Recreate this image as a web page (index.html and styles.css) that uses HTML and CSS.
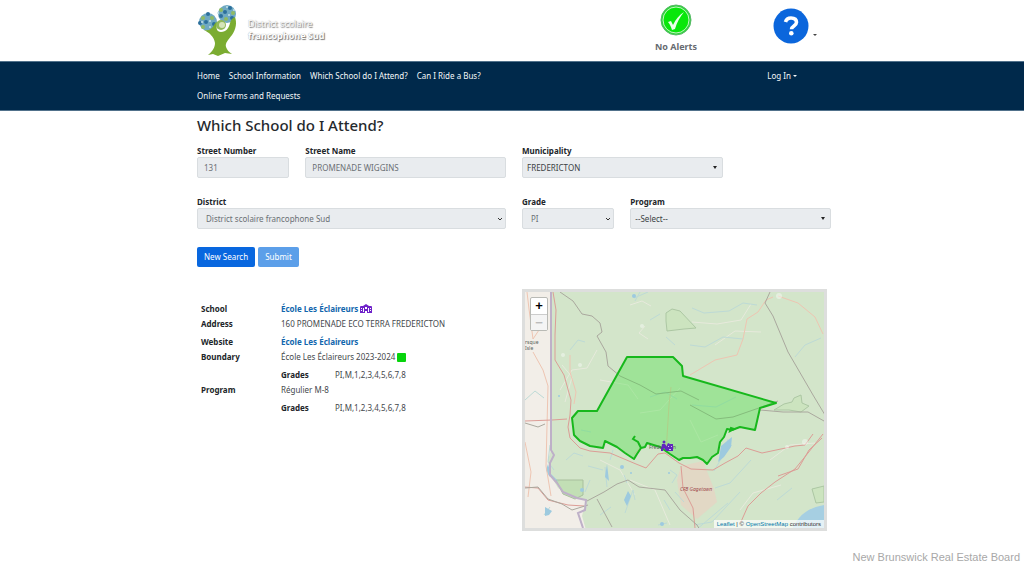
FILE: index.html
```html
<!DOCTYPE html>
<html lang="en">
<head>
<meta charset="utf-8">
<meta name="viewport" content="width=device-width, initial-scale=1">
<title>Which School do I Attend?</title>
<link rel="stylesheet" href="styles.css">
</head>
<body>
<header class="banner">
  <div class="container banner-row">
    <a class="brand" href="#">
      <svg class="brand-tree" viewBox="0 0 42 52" aria-hidden="true">
        <g fill="#6fa9c2"><circle cx="11" cy="18" r="9"/><circle cx="30" cy="10" r="9"/></g>
        <g fill="#8fba62"><circle cx="6" cy="14" r="2"/><circle cx="15" cy="14" r="2"/><circle cx="24" cy="6" r="2"/><circle cx="36" cy="9" r="2"/><circle cx="29" cy="15" r="2"/><circle cx="6" cy="23" r="2"/></g>
        <g fill="#2c6f9c"><circle cx="9" cy="18" r="2"/><circle cx="17" cy="20" r="2"/><circle cx="28" cy="8" r="2"/><circle cx="35" cy="14" r="2"/><circle cx="24" cy="12" r="2"/><circle cx="11" cy="10" r="2"/><circle cx="33" cy="4" r="2"/><circle cx="3" cy="19" r="2"/></g>
        <g fill="#c4e2ea"><circle cx="5" cy="18" r="1"/><circle cx="13" cy="23" r="1"/><circle cx="30" cy="3" r="1"/><circle cx="37" cy="6" r="1"/><circle cx="21" cy="9" r="1"/><circle cx="13" cy="17" r="1"/><circle cx="32" cy="11" r="1"/></g>
        <path fill="#7bac31" d="M7 26c5 1 8-1 10-5 1-2 2-3 4-3-3 6-1 10 3 10 5 0 8-4 9-9 1-3 2-5 5-6 2 6 1 12-3 18-4 5-7 8-6 12 1 3 3 5 6 7l-7-1-7 3-5-2-5 1c5-4 7-8 7-12-1-6-5-10-11-13z"/>
        <circle cx="24" cy="21" r="5" fill="#91b95a"/><circle cx="25" cy="21" r="3" fill="#d5e4b9"/>
      </svg>
      <span class="brand-name">District scolaire<strong>francophone Sud</strong></span>
    </a>
    <a class="alerts" href="#">
      <svg class="alerts-icon" viewBox="0 0 32 32" aria-hidden="true">
        <circle cx="16" cy="16" r="15" fill="#2fd43c" stroke="#58b967"/>
        <circle cx="16" cy="16" r="13" fill="#08e70b" stroke="#c5f5c3" stroke-width="1"/>
        <path d="M8 18l3-1 2 4c3-6 6-10 11-13-4 5-7 10-9 17l-3 1c-1-3-2-6-4-8z" fill="#eaffea"/>
      </svg>
      <span>No Alerts</span>
    </a>
    <button class="help" type="button" aria-label="Help">
      <svg class="help-icon" viewBox="0 0 36 36" aria-hidden="true">
        <circle cx="18" cy="18" r="17.500" fill="#0b66dc"/>
        <path d="M12.500 14c.8-3 3-4 5.500-4 3.500 0 5.500 1.700 5.500 4.300 0 3.700-5 3.500-5 7" fill="none" stroke="#fff" stroke-width="3.600"/>
        <circle cx="18.300" cy="25.300" r="2.300" fill="#fff"/>
      </svg>
      <span class="caret"></span>
    </button>
  </div>
</header>
<nav class="navbar">
  <div class="container nav-row">
    <div class="nav-links">
      <a href="#">Home</a><a href="#">School Information</a><a href="#">Which School do I Attend?</a><a href="#">Can I Ride a Bus?</a><a href="#">Online Forms and Requests</a>
    </div>
    <button class="login" type="button">Log In<span class="caret"></span></button>
  </div>
</nav>
<main class="container">
  <h1>Which School do I Attend?</h1>
  <form class="search">
    <div class="row">
      <div class="field span-2"><label for="number">Street Number</label><input id="number" value="131" readonly></div>
      <div class="field span-4"><label for="street">Street Name</label><input id="street" value="PROMENADE WIGGINS" readonly></div>
      <div class="field span-4"><label for="city">Municipality</label><select class="combo" id="city"><option>FREDERICTON</option></select></div>
    </div>
    <div class="row">
      <div class="field span-6"><label for="district">District</label><select class="chevron" id="district"><option>District scolaire francophone Sud</option></select></div>
      <div class="field span-2"><label for="grade">Grade</label><select class="chevron" id="grade"><option>PI</option></select></div>
      <div class="field span-4"><label for="program">Program</label><select class="combo" id="program"><option>--Select--</option></select></div>
    </div>
    <div class="actions">
      <button class="btn" type="button">New Search</button>
      <button class="btn" type="submit" disabled>Submit</button>
    </div>
  </form>
  <div class="row results">
    <dl class="details span-6">
      <dt>School</dt>
      <dd><a href="#">École Les Éclaireurs</a>
        <svg class="school-icon" viewBox="0 0 12 10" aria-hidden="true"><path d="M0 3Q0 2 1 2H3L6 0l3 2h2q1 0 1 1v6H7V7H5v2H0z" fill="#6f22c9"/><path d="M1 4h1v1H1zM1 6h1v1H1zM10 4h1v1h-1zM10 6h1v1h-1zM5 3h2v2H5zM3 4h1v4H3zM8 4h1v4H8z" fill="#fff"/></svg>
      </dd>
      <dt>Address</dt><dd>160 PROMENADE ECO TERRA FREDERICTON</dd>
      <dt class="spaced">Website</dt><dd class="spaced"><a href="#">École Les Éclaireurs</a></dd>
      <dt>Boundary</dt><dd>École Les Éclaireurs 2023-2024 <span class="swatch"></span></dd>
      <dd class="grades spaced"><b>Grades</b><span>PI,M,1,2,3,4,5,6,7,8</span></dd>
      <dt>Program</dt><dd>Régulier M-8</dd>
      <dd class="grades spaced"><b>Grades</b><span>PI,M,1,2,3,4,5,6,7,8</span></dd>
    </dl>
    <div class="map span-6">
      <svg class="map-canvas" viewBox="525 292 299 236" preserveAspectRatio="xMidYMid slice" role="img" aria-label="School boundary map">
        <rect x="520" y="285" width="310" height="250" fill="#d3e5ca"/>
        <path fill="#f2eee8" d="M520 285H551V450l-3 10 2 14 8 14 12 8 16 4-4 16 4 14H520z"/>
        <path fill="#a6cfe2" d="M824 505c-15 3-24 8-32 24h32z"/>
        <path fill="#e2d8c5" d="M681 466l22-5 11 28 3 13-20 17-16-14-4-25z"/>
        <path fill="#c2dfb5" stroke="#a8bf9d" d="M556 480h27v15l-8 4-12-5z"/>
        <path fill="#cce4bf" stroke="#acc7a3" d="M666 313l6-4 8 2 16 17-12 1-17 2-1-10zM774 410l10-6 8-2 2-4 7-3 1 8 7 3-8 6-12-2zM812 489l12-3v16l-8 1z"/>
        <g fill="none" stroke="#e7eadc">
          <path d="M560 390l12-20 15-2 10-18M562 365l10 12-7 25M692 322l25 2 24-4 10-16M630 305l12-4 9 5M645 326l-6 7 9 6M690 420l11 22 17-7M715 345l20-14 26 1M600 460l20 10 15 25M770 460l20-15 25-2M740 510l13-17 28-8M630 480l25 10 15 35M600 380l28 5 10 14M680 388l-20 22-20 3"/>
        </g>
        <g fill="none" stroke="#bddad6">
          <path d="M570 350l8-10 7 2M640 292l-5 9M634 298l14-6M650 320l10-6M692 308l12 5 25-2 14-8 14 2M690 345l15 2 18-10 20 2M795 357l10-12 16-7M732 445l-9 9 5-15M721 459l-7 12M751 460l-21 23-15 5M740 492l-28 30-18 3M728 503l-12 10-20 17M607 487l-2-20M600 515l11-8M624 475l3 8M625 513l8-23 2 10M658 525l9-2M670 470l7 5-5 8M675 492l9 10M550 445l-2 17 6 8M544 515l6-8M525 400l10-9 9 7M581 430l10 2M650 397l15-5 12 7M692 405l24 2 20-10M566 460l8-7 9 3M588 466l15 4M610 460l3-10M590 480l-5 12M670 510l-6-10M675 345l-9-8M777 500l15-12"/>
        </g>
        <g fill="#9dcadf"><path d="M545 507l7 4-3 4-4 1zM624 500l4-9 3 5-4 10zM605 477l2-13 2 17zM719 458l2-12 11-9-1 10-7 10-6 5zM548 464l3 10 8 8-10-6-3-6z"/><circle cx="622" cy="467" r="2"/><circle cx="631" cy="473" r="1"/><circle cx="662" cy="524" r="2"/><circle cx="669" cy="473" r="1"/><circle cx="634" cy="296" r="2"/><circle cx="559" cy="396" r="1"/><circle cx="582" cy="490" r="2"/></g>
        <g fill="none" stroke="#eec5b2">
          <path d="M527 292l2 17 4 30 12-18 2-22M533 352l10 18 5 16-2 80 5 30M570 355v17l6 20-2 12M666 453l3-48 2-18M690 375l25-15 22-5 6-16 4-20 11-7 8-12 7-3M778 296l20 7 17 14 8 17M640 448l-6 6M525 442l6 30-3 25"/>
        </g>
        <g fill="none" stroke="#dc9d96">
          <path d="M553 292l3 18-1 25 0 25 9 15 7 25-1 15-2 12 2 11 10 10 10 3 20 2 26 11 10 4 12-14 7-1 14 10 12 6 22 1 12-7 13-7 8-8 16 5 33-7 10-1 8-11M525 421l27-1 15-1M681 466l2 22 10 20 2 20M823 434l-15 19-13 16-20 13-14 11-13 13-8 18"/>
          <path d="M822 438l-13 12-11 19-20 7M524 487l14 1 10 12 20 5 16 1"/>
        </g>
        <g fill="none" stroke="#aaa89e">
          <path d="M560 292l13 9 9 13 10 2 8 7 2 9-5 4 9 16 2 14 12 10 20 9 16 9 25-3 18 9M770 292l-5 11 8 13 15 36 25 43 12 20M587 501l17-9 13-8 11-4 11 7 26 3 15 20 17 15 6 10M597 499l15 28M690 405l26 14 17-2 23-8 22-8M760 410l23 2 25 0 16 9M525 423l13 4 7-3M525 488l13-1 10 12 14 5 10 6 16-5"/>
        </g>
        <path fill="none" stroke="#beb0c8" stroke-width="2" d="M551 290V450l3 5-4 8 0 12 7 8 6 9 14 6 9 2-1 10-7 3 5 15"/>
        <g fill="#fff" fill-opacity=".4"><circle cx="563" cy="355" r="2"/><circle cx="642" cy="326" r="2"/><circle cx="787" cy="447" r="2"/><circle cx="580" cy="365" r="2"/><circle cx="779" cy="296" r="3"/><circle cx="805" cy="442" r="3"/></g>
        <path fill="#43e03f" fill-opacity=".36" stroke="#17b81c" stroke-width="2" stroke-linejoin="round" d="M627 357H673L682 366 683 376 776 403 760 408 755 430 740 427 732 430 727 429 724 437 720 442 718 453 712 457 707 464 703 460 697 457 690 458 683 458 679 460 670 454 660 447 647 443 645 447 641 448 637 454 634 459 625 453 617 447 605 441 603 448 590 446 580 441 574 435 572 418 578 411 597 411z"/>
        <path fill="none" stroke="#17b81c" stroke-width="2" d="M641 448L638 442 633 439 635 436M730 431l4-2-3-1z"/>
        <g class="map-label">
          <text x="649" y="449">Fredericton</text>
          <text x="525" y="344">rsque</text><text x="525" y="350">Isle</text>
          <text class="map-label-base" x="680" y="491">CFB Gagetown</text>
        </g>
        <g fill="#6127bd"><circle cx="664" cy="442" r="1.500"/><path d="M662 444h3l3 4v3h-2l-2-3-2 3h-1zM667 445l1-2 2 1 3 0v7h-6zM661 448h2v3h-2z"/></g>
        <path fill="#fff" fill-opacity=".7" d="M668 446h1v1h-1zM671 446h1v1h-1zM669 449h2v1h-2z"/>
      </svg>
      <div class="zoom">
        <button type="button" aria-label="Zoom in">+</button>
        <button type="button" aria-label="Zoom out" disabled>−</button>
      </div>
      <div class="attribution"><a href="#">Leaflet</a> | © <a href="#">OpenStreetMap</a> contributors</div>
    </div>
  </div>
</main>
<footer class="credit">New Brunswick Real Estate Board</footer>
</body>
</html>
```
FILE: styles.css
```css
* { box-sizing: border-box; }
body {
  margin: 0;
  min-height: 100vh;
  display: flex;
  flex-direction: column;
  background: #fff;
  color: #44484c;
  font: 8px/12px "Noto Sans", "Open Sans", sans-serif;
}
a { color: inherit; text-decoration: none; }
button, input, select { font: inherit; color: inherit; }
button { padding: 0; border: 0; background: none; }
.container {
  width: 100%;
  max-width: 638px;
  margin: 0 auto;
  padding-left: 4px;
}
.caret {
  display: inline-block;
  margin-left: 2px;
  border: 2px solid transparent;
  border-top-color: currentColor;
  border-bottom: 0;
  vertical-align: 2px;
}

.banner-row { display: flex; height: 61px; }
.brand { display: flex; align-items: flex-start; padding-top: 4px; }
.brand-tree { width: 42px; height: 52px; }
.brand-name {
  display: flex;
  flex-direction: column;
  margin: 14px 0 0 9px;
  color: #fff;
  font: 9px/12px "Open Sans", sans-serif;
  text-shadow: 1px 1px 1px #777, 0 0 1px #999;
}
.brand-name strong { font-weight: 700; }
.alerts {
  display: flex;
  flex-direction: column;
  align-items: center;
  margin-left: auto;
  padding-top: 4px;
  color: #666a70;
  font-size: 9px;
  font-weight: 700;
}
.alerts-icon { width: 32px; height: 32px; margin-bottom: 5px; }
.help { display: flex; align-items: center; align-self: flex-start; margin: 8px 14px 0 76px; color: #444; }
.help-icon { width: 36px; height: 36px; }
.help .caret { margin: 18px 0 0 4px; }

.navbar { background: #00294b; border-top: 1px solid #51718b; border-bottom: 1px solid #51718b; color: #f4f7f9; }
.nav-row { display: flex; align-items: flex-start; padding-top: 4px; padding-bottom: 4px; line-height: 20px; }
.nav-links { display: flex; flex-wrap: wrap; column-gap: 9px; max-width: 320px; }
.login { margin: 0 34px 0 auto; }

h1 { margin: 4px 0 10px; color: #25292d; font-size: 15px; line-height: 20px; font-weight: 500; }
.row { display: grid; grid-template-columns: repeat(12, 1fr); column-gap: 16px; }
.span-2 { grid-column: span 2; }
.span-4 { grid-column: span 4; }
.span-6 { grid-column: span 6; }
.search .row { margin-bottom: 18px; }
.field label { display: block; color: #212529; font-weight: 700; }
.field input, .field select {
  display: block;
  width: 100%;
  height: 21px;
  padding: 0 6px;
  border: 1px solid #d9dde0;
  border-radius: 2px;
  background-color: #e9ecef;
  color: #6b7075;
}
.field select { appearance: none; background-repeat: no-repeat; }
.field .chevron {
  padding-left: 8px;
  background-image: url("data:image/svg+xml,%3Csvg xmlns='http://www.w3.org/2000/svg' viewBox='0 0 6 4'%3E%3Cpath d='M1 1l2 2 2-2' fill='none' stroke='%23333'/%3E%3C/svg%3E");
  background-size: 6px 4px;
  background-position: right 2px center;
}
.field .combo {
  padding-left: 4px;
  color: #3b3f44;
  background-image: url("data:image/svg+xml,%3Csvg xmlns='http://www.w3.org/2000/svg' viewBox='0 0 6 4'%3E%3Cpath d='M1 0h4L3 3z' fill='%23222'/%3E%3C/svg%3E");
  background-size: 6px 4px;
  background-position: right 4px center;
}
.actions { display: flex; gap: 3px; }
.btn { height: 20px; padding: 0 7px; border-radius: 2px; background: #0867df; color: #fff; }
.btn:disabled { background: #5c9fe9; }

.results { margin-top: 22px; align-items: start; }
.details {
  display: grid;
  grid-template-columns: 76px 1fr;
  column-gap: 4px;
  margin: 0;
  padding: 12px 0 0 4px;
  line-height: 15px;
}
.details dt, .details b { color: #212529; font-weight: 700; }
.details dd { margin: 0; }
.details a { color: #1166ad; font-weight: 700; }
.details .spaced { margin-top: 3px; }
.details .grades { grid-column: 2; display: flex; }
.grades b { width: 54px; }
.school-icon { width: 12px; height: 10px; vertical-align: -2px; }
.swatch { display: inline-block; width: 9px; height: 9px; border-radius: 1px; background: #07d40c; vertical-align: -2px; }

.map { position: relative; margin-right: 4px; border: 3px solid #dddedd; }
.map-canvas { display: block; width: 100%; }
.map-label { font: 5px "Noto Sans", sans-serif; fill: #55605a; }
.map-label-base { font-style: italic; fill: #a0484c; }
.zoom { position: absolute; top: 5px; left: 5px; border: 1px solid #b9bab5; border-radius: 2px; background: #fff; }
.zoom button { display: block; width: 16px; height: 16px; color: #000; font: bold 13px/16px "Liberation Sans", sans-serif; }
.zoom button:disabled { border-top: 1px solid #ccc; background: #f4f4f4; color: #bbb; }
.attribution {
  position: absolute;
  right: 0;
  bottom: 0;
  padding: 0 3px;
  background: rgba(255, 255, 255, .7);
  color: #333;
  font: 6px/8px "Liberation Sans", sans-serif;
}
.attribution a { color: #0078a8; }
.credit { margin-top: auto; padding-right: 4px; color: #a8a8a8; text-align: right; font: 11px/14px "Liberation Sans", sans-serif; }
```
